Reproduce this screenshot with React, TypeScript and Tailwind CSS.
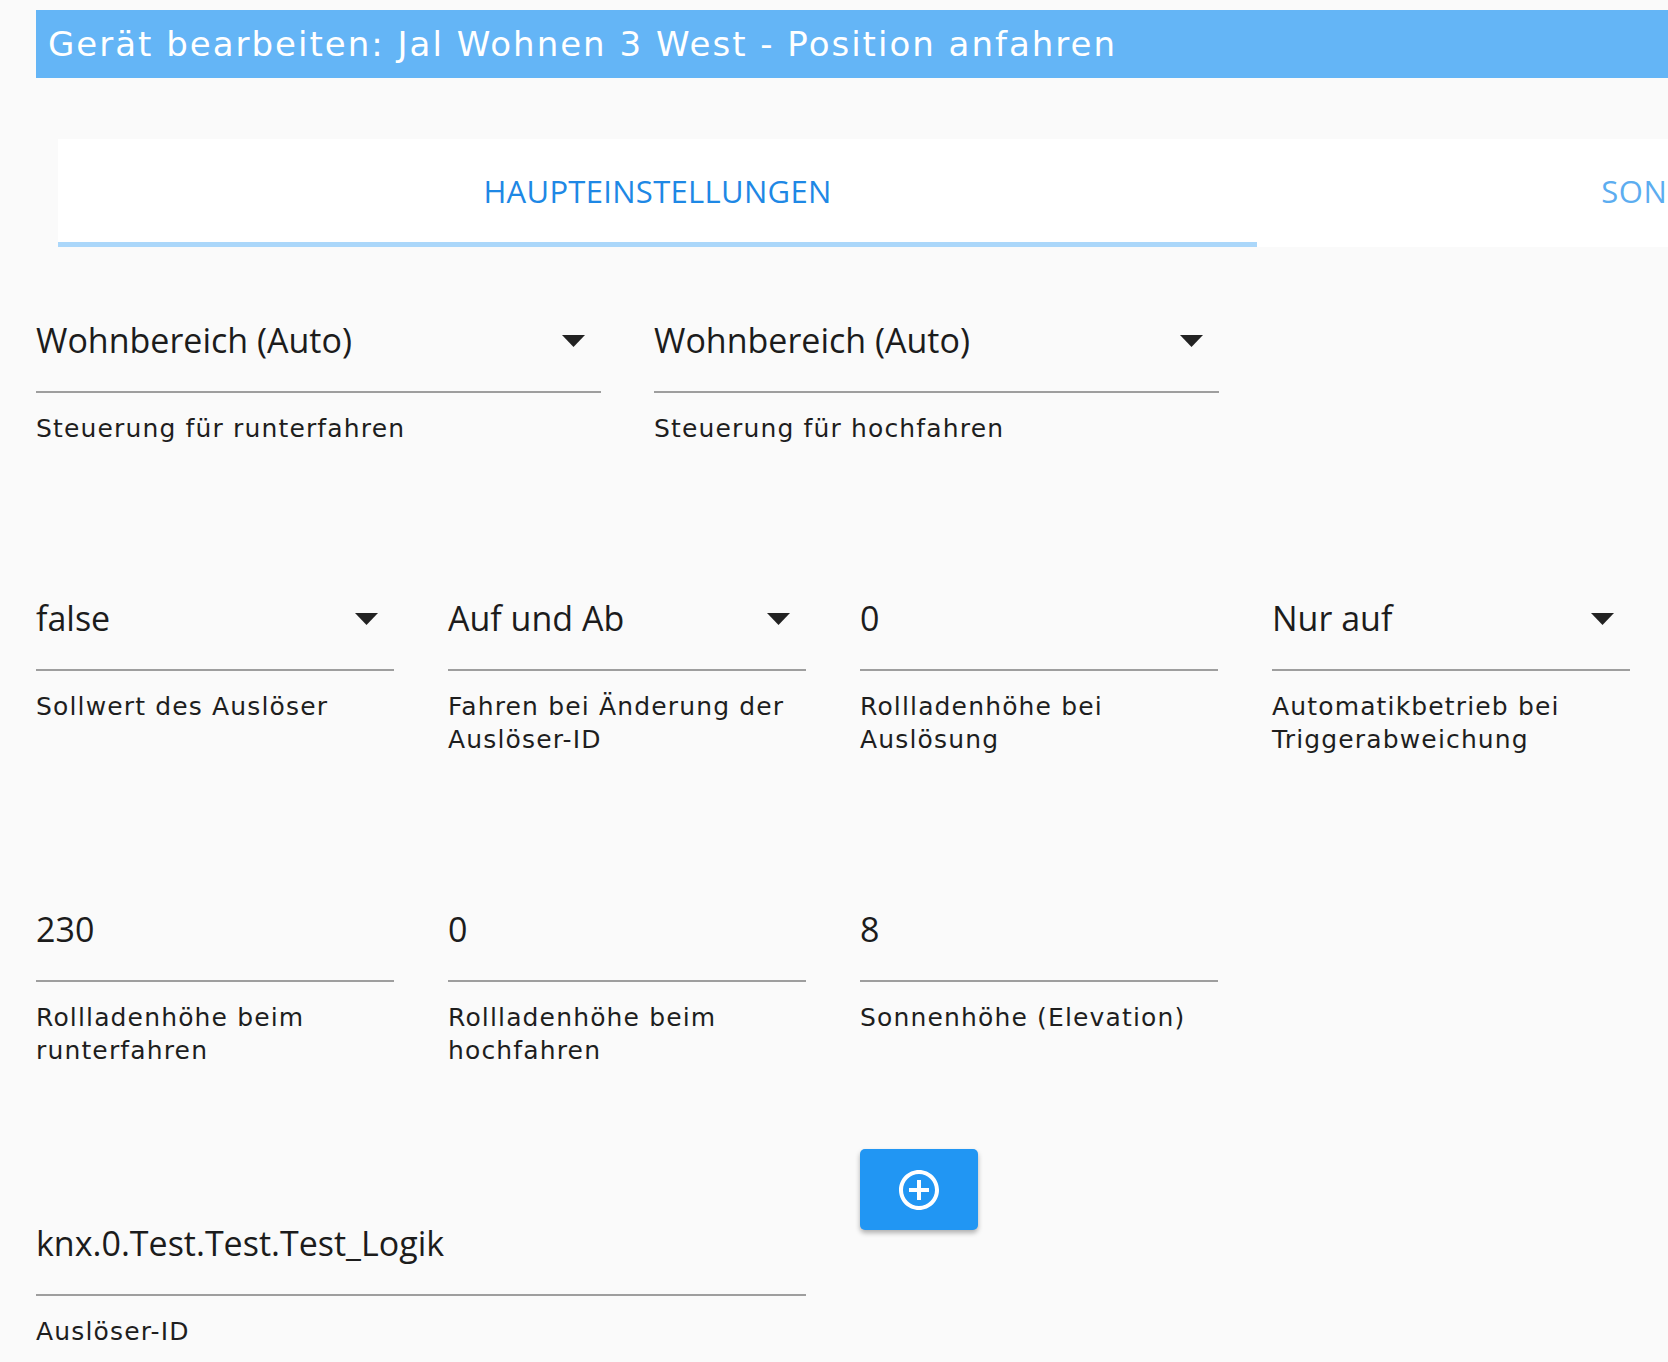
import React from 'react';

interface Field {
  value: string;
  helper: string;
  select?: boolean;
}

const triggerRow: Field[] = [
  { value: 'false', helper: 'Sollwert des Auslöser', select: true },
  { value: 'Auf und Ab', helper: 'Fahren bei Änderung der Auslöser-ID', select: true },
  { value: '0', helper: 'Rollladenhöhe bei Auslösung' },
  { value: 'Nur auf', helper: 'Automatikbetrieb bei Triggerabweichung', select: true },
];

const heightRow: Field[] = [
  { value: '230', helper: 'Rollladenhöhe beim runterfahren' },
  { value: '0', helper: 'Rollladenhöhe beim hochfahren' },
  { value: '8', helper: 'Sonnenhöhe (Elevation)' },
];

const DropArrow = () => (
  <svg className="absolute right-[16px] top-[15px] w-[23px] h-[12px]" viewBox="0 0 23 12">
    <polygon points="0,0 23,0 11.5,12" fill="#222" />
  </svg>
);

const FormField: React.FC<{ field: Field; className?: string }> = ({ field, className }) => (
  <div className={className ?? 'pt-[73px]'}>
    <div className="relative h-[73px] border-b-2 border-[#9e9e9e]">
      <div className="font-['Open_Sans',sans-serif] text-[34px] leading-[40px] text-[#1c1c1c]">{field.value}</div>
      {field.select && <DropArrow />}
    </div>
    <div className="mt-[19px] font-['DejaVu_Sans',sans-serif] text-[25px] leading-[33px] tracking-[1.15px] text-[#1e1e1e]">
      {field.helper}
    </div>
  </div>
);

const AddCircleIcon = () => (
  <svg className="w-[48px] h-[48px]" viewBox="0 0 24 24" fill="white">
    <path d="M13 7h-2v4H7v2h4v4h2v-4h4v-2h-4V7zm-1-5C6.48 2 2 6.48 2 12s4.48 10 10 10 10-4.48 10-10S17.52 2 12 2zm0 18c-4.41 0-8-3.59-8-8s3.59-8 8-8 8 3.59 8 8-3.59 8-8 8z" />
  </svg>
);

export default function App() {
  return (
    <div className="w-[1668px] h-[1362px] overflow-hidden bg-[#fafafa]">
      <div className="pt-[10px] pl-[36px]">
        <div className="h-[68px] w-[1640px] bg-[#64b5f6] flex items-center pl-[12px]">
          <h1 className="font-['DejaVu_Sans',sans-serif] text-[34px] leading-[34px] tracking-[2px] text-white whitespace-nowrap">
            Gerät bearbeiten: Jal Wohnen 3 West - Position anfahren
          </h1>
        </div>
      </div>

      <div className="mt-[61px] ml-[58px] flex bg-white w-[2398px]">
        <div className="w-[1199px] h-[108px] flex flex-col">
          <div className="flex-1 pt-[34px] text-center font-['Open_Sans',sans-serif] text-[31px] leading-[36px] tracking-[0.3px] text-[#1e88e5]">
            HAUPTEINSTELLUNGEN
          </div>
          <div className="h-[5px] bg-[#abd7fa]" />
        </div>
        <div className="w-[1199px] h-[108px] pt-[34px] text-center font-['Open_Sans',sans-serif] text-[31px] leading-[36px] tracking-[0.6px] text-[#5cadf0] whitespace-nowrap">
          SONNENSCHUTZ EINSTELLUNGEN
        </div>
      </div>

      <div className="pl-[36px] flex flex-col gap-[80px]">
        <div className="grid grid-cols-[565px_565px] gap-x-[53px]">
          <FormField field={{ value: 'Wohnbereich (Auto)', helper: 'Steuerung für runterfahren', select: true }} />
          <FormField field={{ value: 'Wohnbereich (Auto)', helper: 'Steuerung für hochfahren', select: true }} />
        </div>

        <div className="grid grid-cols-[358px_358px_358px_358px] gap-x-[54px]">
          {triggerRow.map((f, i) => (
            <FormField key={i} field={f} />
          ))}
        </div>

        <div className="grid grid-cols-[358px_358px_358px_358px] gap-x-[54px]">
          {heightRow.map((f, i) => (
            <FormField key={i} field={f} />
          ))}
        </div>

        <div className="grid grid-cols-[358px_358px_358px_358px] gap-x-[54px]">
          <FormField className="col-span-2 pt-[76px]" field={{ value: 'knx.0.Test.Test.Test_Logik', helper: 'Auslöser-ID' }} />
          <div className="pt-[2px]">
            <button className="w-[118px] h-[81px] rounded-[5px] bg-[#2196f3] flex items-center justify-center shadow-[0_3px_5px_rgba(0,0,0,0.3)]">
              <AddCircleIcon />
            </button>
          </div>
        </div>
      </div>
    </div>
  );
}
